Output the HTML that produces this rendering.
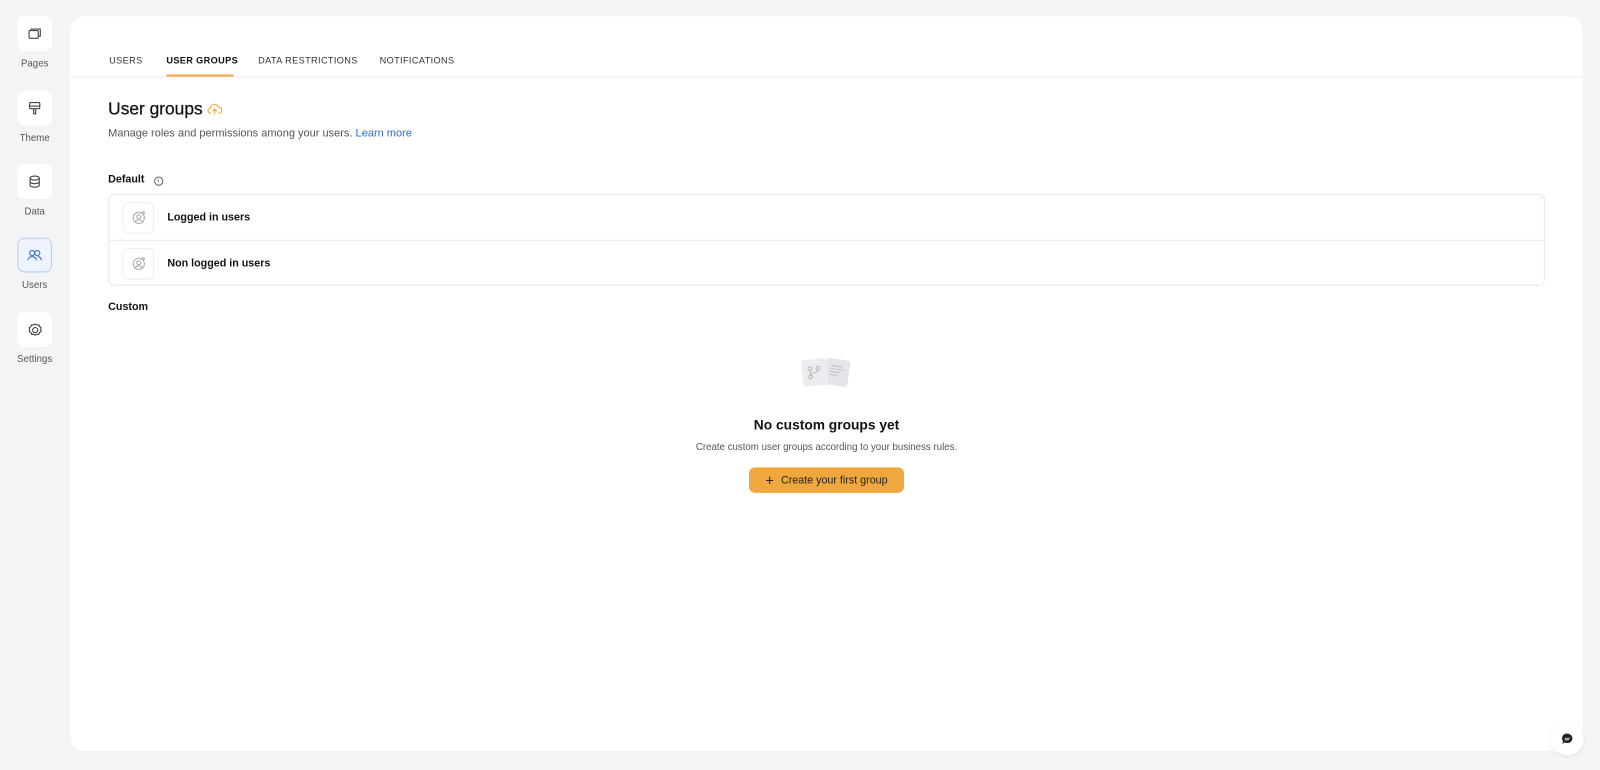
<!DOCTYPE html>
<html><head><style>
*{box-sizing:border-box;margin:0;padding:0}
html,body{width:1600px;height:770px;overflow:hidden;background:#f3f4f6}
#w{width:1568px;height:755px;position:relative;transform:scale(1.0204);transform-origin:0 0;font-family:"Liberation Sans",sans-serif;color:#111}
.nav{position:absolute;left:17px;width:34px;text-align:center}
.nb{width:34px;height:34px;background:#fff;border-radius:7px;display:flex;align-items:center;justify-content:center}
.nb.act{background:#eef3fd;border:1px solid #b9cdf3}
.nl{font-size:9.5px;color:#555;margin-top:7px;width:60px;margin-left:-13px}
.card{position:absolute;left:69px;top:16px;width:1482px;height:720px;background:#fff;border-radius:14px}
.tabs{position:absolute;top:0;left:0;right:0;height:60px;border-bottom:1px solid #eceef1}
.tab{position:absolute;top:38px;font-size:9px;letter-spacing:.35px;color:#333}
.tab.a{color:#111;font-weight:bold}
.ul{position:absolute;left:94px;top:57px;width:66px;height:2px;background:#f0a840}
h1{position:absolute;left:37px;top:81px;font-size:17px;font-weight:normal;color:#111;-webkit-text-stroke:.25px #111}
.sub{position:absolute;left:37px;top:109px;font-size:10.8px;color:#555}
.sub a{color:#2a6fd6;text-decoration:none}
.lbl{position:absolute;left:37px;font-size:10.5px;font-weight:bold;color:#111}
.list{position:absolute;left:37px;top:174px;width:1408px;height:90px;border:1px solid #e5e7eb;border-radius:6px}
.row{height:44px;display:flex;align-items:center;padding-left:13px;font-size:10.5px;font-weight:bold}
.row+.row{border-top:1px solid #e5e7eb;height:45px}
.ic{width:31px;height:31px;border:1px solid #eee;border-radius:6px;display:flex;align-items:center;justify-content:center;margin-right:13px}
.empty{position:absolute;left:0;width:1482px;text-align:center}
.btn{position:absolute;left:665px;top:442px;width:152px;height:25px;background:#efa73e;border-radius:6px;font-size:10.5px;color:#222;display:flex;align-items:center;justify-content:center}
</style></head><body><div id="w">
<div class="nav" style="top:16px"><div class="nb"><svg width="14" height="14" viewBox="0 0 14 14" fill="none" stroke="#444" stroke-width="1.1"><rect x="1.5" y="4" width="9" height="7.5" rx="1"/><path d="M3.5 4V2.5h9v7h-2"/></svg></div><div class="nl">Pages</div></div>
<div class="nav" style="top:89px"><div class="nb"><svg width="14" height="14" viewBox="0 0 14 14" fill="none" stroke="#444" stroke-width="1.1"><rect x="2" y="1.5" width="10" height="6" rx="1"/><path d="M2 5h10M6 7.5v5h2v-5"/></svg></div><div class="nl">Theme</div></div>
<div class="nav" style="top:161px"><div class="nb"><svg width="14" height="14" viewBox="0 0 14 14" fill="none" stroke="#444" stroke-width="1.1"><ellipse cx="7" cy="3.5" rx="4.5" ry="2"/><path d="M2.5 3.5v7c0 1.1 2 2 4.5 2s4.5-.9 4.5-2v-7M2.5 7c0 1.1 2 2 4.5 2s4.5-.9 4.5-2"/></svg></div><div class="nl">Data</div></div>
<div class="nav" style="top:233px"><div class="nb act"><svg width="16" height="14" viewBox="0 0 16 14" fill="none" stroke="#3b6fd0" stroke-width="1.1"><circle cx="5.5" cy="5" r="2.5"/><path d="M1.5 12c0-2.2 1.8-3.5 4-3.5s4 1.3 4 3.5"/><circle cx="10.5" cy="5" r="2.5"/><path d="M11 8.5c2 0 3.5 1.3 3.5 3.5"/></svg></div><div class="nl">Users</div></div>
<div class="nav" style="top:306px"><div class="nb"><svg width="15" height="15" viewBox="0 0 15 15" fill="none" stroke="#444" stroke-width="1.1"><circle cx="7.5" cy="7.5" r="2.5"/><path d="M7.5 1.5l1.6 1 1.9-.2.7 1.8 1.6 1-.4 1.900.4 1.9-1.6 1-.7 1.8-1.9-.2-1.6 1-1.6-1-1.9.2-.7-1.8-1.6-1 .4-1.9-.4-1.9 1.6-1 .7-1.8 1.9.2z"/></svg></div><div class="nl">Settings</div></div>

<div class="card">
<div class="tabs">
<span class="tab" style="left:38px">USERS</span>
<span class="tab a" style="left:94px">USER GROUPS</span>
<span class="tab" style="left:184px">DATA RESTRICTIONS</span>
<span class="tab" style="left:303px">NOTIFICATIONS</span>
<div class="ul"></div>
</div>
<h1>User groups <svg width="15" height="13" viewBox="0 0 15 13" fill="none" stroke="#efa73e" stroke-width="1.1" style="vertical-align:-1px"><path d="M4 11H3.5a2.5 2.5 0 0 1-.3-5A4 4 0 0 1 11 5a3 3 0 0 1 .5 6H11"/><path d="M7.5 12V7M5.5 9l2-2 2 2"/></svg></h1>
<div class="sub">Manage roles and permissions among your users. <a>Learn more</a></div>
<div class="lbl" style="top:154px">Default <span style="font-weight:normal;color:#555;margin-left:6px;display:inline-block;width:9px;height:9px;border:1px solid #666;border-radius:50%;line-height:8px;text-align:center;font-size:7px">i</span></div>
<div class="list">
<div class="row"><div class="ic"><svg width="14" height="14" viewBox="0 0 14 14" fill="none" stroke="#aaa" stroke-width="1"><circle cx="7" cy="7.5" r="5.5"/><circle cx="7" cy="6.5" r="2"/><path d="M3.5 11.5c1-1.5 2-2 3.5-2s2.5.5 3.5 2"/><circle cx="11.5" cy="2.5" r="1"/></svg></div>Logged in users</div>
<div class="row"><div class="ic"><svg width="14" height="14" viewBox="0 0 14 14" fill="none" stroke="#aaa" stroke-width="1"><circle cx="7" cy="7.5" r="5.5"/><circle cx="7" cy="6.5" r="2"/><path d="M3.5 11.5c1-1.5 2-2 3.5-2s2.5.5 3.5 2"/><circle cx="11.5" cy="2.5" r="1"/></svg></div>Non logged in users</div>
</div>
<div class="lbl" style="top:279px">Custom</div>
<svg style="position:absolute;left:714px;top:332px" width="52" height="34" viewBox="0 0 52 34"><g transform="rotate(8 38 17)"><rect x="25" y="4" width="24" height="26" rx="3" fill="#e4e5ea"/><path d="M30 11h12M30 14h14M30 17h10M30 20h8" stroke="#bbb" stroke-width=".8"/></g><g transform="rotate(-6 15 17)"><rect x="3" y="4" width="25" height="26" rx="3" fill="#ebecf0"/><circle cx="11" cy="13" r="1.8" fill="none" stroke="#aaa" stroke-width=".8"/><circle cx="19" cy="13" r="1.8" fill="none" stroke="#aaa" stroke-width=".8"/><circle cx="11" cy="21" r="1.8" fill="none" stroke="#aaa" stroke-width=".8"/><path d="M11 15v4M19 15c0 3-8 2-8 4" fill="none" stroke="#aaa" stroke-width=".8"/></g></svg>
<div class="empty" style="top:393px;font-size:13.5px;font-weight:bold">No custom groups yet</div>
<div class="empty" style="top:417px;font-size:9.5px;color:#555">Create custom user groups according to your business rules.</div>
<div class="btn"><span style="font-size:14px;margin-right:7px;font-weight:300">+</span>Create your first group</div>
</div>
<div style="position:absolute;left:1520px;top:708px;width:32px;height:32px;border-radius:50%;background:#fff;box-shadow:0 1px 4px rgba(0,0,0,.08);display:flex;align-items:center;justify-content:center"><svg width="12" height="12" viewBox="0 0 12 12"><path d="M6 1a5 4.6 0 1 1-2.5 8.6L1 11l.8-2.6A4.6 4.6 0 0 1 6 1z" fill="#222"/><path d="M3.5 5.5h5M3.5 7h4" stroke="#fff" stroke-width=".8"/></svg></div>
</div></body></html>
